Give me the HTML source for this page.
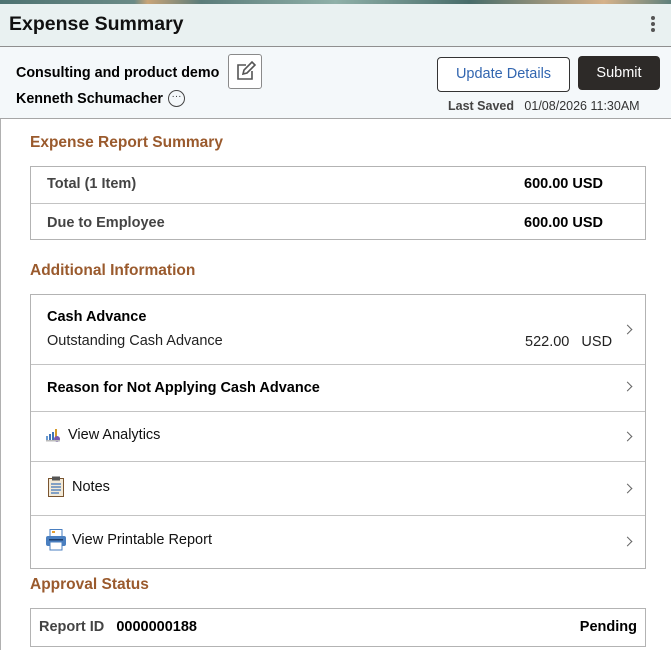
<!DOCTYPE html>
<html><head><meta charset="utf-8"><style>
*{margin:0;padding:0;box-sizing:border-box}
body{width:671px;height:650px;overflow:hidden;font-family:"Liberation Sans",Arial,sans-serif;background:#fff;position:relative;color:#000}
.a{position:absolute;white-space:nowrap}
.top{left:0;top:0;width:671px;height:4px;background:linear-gradient(90deg,#4e7372 0,#6a8a86 20%,#c8a478 22%,#5b7c7a 30%,#8fb0a8 50%,#486c6a 70%,#d6b28a 90%,#5f807c 100%)}
.hdr{left:0;top:4px;width:671px;height:43px;background:#e9f1f1;border-bottom:1px solid #8f8f8f}
.sub{left:0;top:47px;width:671px;height:72px;background:#f4f8fa;border-bottom:1px solid #a6a6a6}
.h{color:#9a5a2d;font-weight:bold;font-size:16px}
.box{left:30px;width:616px;border:1px solid #b3b3b3}
.row{position:absolute;left:0;width:614px;border-top:1px solid #c3c3c3}
.chev{position:absolute;right:14px;width:7px;height:7px;border-right:1.5px solid #666;border-top:1.5px solid #666;transform:rotate(45deg)}
.t{font-size:14.5px}
</style></head><body>
<div class="a top"></div>
<div class="a hdr"></div>
<div class="a" style="left:9px;top:13px;font-size:19.5px;font-weight:bold;color:#111">Expense Summary</div>
<div class="a" style="left:651px;top:16px;width:4px;height:4px;border-radius:2px;background:#555;box-shadow:0 6px 0 #555,0 12px 0 #555"></div>
<div class="a sub"></div>
<div class="a" style="left:16px;top:65px;font-size:14.3px;font-weight:bold">Consulting and product demo</div>
<div class="a" style="left:228px;top:54px;width:34px;height:35px;border:1px solid #8a8a8a;border-radius:3px;background:#fff">
<svg width="34" height="34" viewBox="0 0 34 34" style="position:absolute;left:-1px;top:-1px"><path d="M18 11H10v14h14v-8" fill="none" stroke="#555" stroke-width="1.6"/><path d="M15 20l1-4 8-8 3 3-8 8z" fill="none" stroke="#555" stroke-width="1.6"/></svg></div>
<div class="a" style="left:16px;top:91px;font-size:14.3px;font-weight:bold">Kenneth Schumacher</div>
<div class="a" style="left:168px;top:90px;width:17px;height:17px;border:1px solid #444;border-radius:50%;font-size:10px;line-height:12px;text-align:center;color:#333">···</div>
<div class="a" style="left:437px;top:57px;width:133px;height:35px;border:1px solid #333;border-radius:4px;background:#fff;color:#3266b0;font-size:14.5px;text-align:center;line-height:33px">Update Details</div>
<div class="a" style="left:578px;top:56px;width:82px;height:34px;border-radius:4px;background:#2d2a28;color:#fff;font-size:14.5px;text-align:center;line-height:34px">Submit</div>
<div class="a" style="left:448px;top:99px;font-size:12.5px;color:#333"><b style="color:#444">Last Saved</b>&nbsp;&nbsp; 01/08/2026 11:30AM</div>
<div class="a" style="left:0;top:119px;width:1px;height:531px;background:#b0b0b0"></div>

<div class="a h" style="left:30px;top:134px;font-size:15.5px">Expense Report Summary</div>
<div class="a box" style="top:166px;height:74px">
<div class="a t" style="left:16px;top:9px;font-weight:bold;color:#444">Total (1 Item)</div>
<div class="a t" style="right:42px;top:9px;font-weight:bold">600.00 USD</div>
<div class="row" style="top:36px"></div>
<div class="a t" style="left:16px;top:48px;font-weight:bold;color:#444">Due to Employee</div>
<div class="a t" style="right:42px;top:48px;font-weight:bold">600.00 USD</div>
</div>

<div class="a h" style="left:30px;top:262px;font-size:15.5px">Additional Information</div>
<div class="a box" style="top:294px;height:275px">
<div class="a t" style="left:16px;top:14px;font-weight:bold">Cash Advance</div>
<div class="a t" style="left:16px;top:38px;color:#222">Outstanding Cash Advance</div>
<div class="a t" style="left:494px;top:39px;color:#222">522.00&nbsp;&nbsp; USD</div>
<div class="chev" style="top:31px"></div>
<div class="row" style="top:69px"></div>
<div class="a t" style="left:16px;top:85px;font-weight:bold">Reason for Not Applying Cash Advance</div>
<div class="chev" style="top:88px"></div>
<div class="row" style="top:116px"></div>
<svg class="a" style="left:15px;top:133px" width="18" height="16" viewBox="0 0 18 16"><rect x="0" y="8" width="2" height="4" fill="#6a9ad0"/><rect x="3" y="6" width="2" height="6" fill="#3f74b8"/><rect x="6" y="4" width="2" height="8" fill="#3f74b8"/><rect x="9" y="1" width="2" height="10" fill="#d49a2a"/><circle cx="11" cy="11" r="3" fill="#7a5ab0"/><rect x="0" y="12" width="14" height="1.5" fill="#bbb"/></svg>
<div class="a t" style="left:37px;top:132px;color:#111">View Analytics</div>
<div class="chev" style="top:138px"></div>
<div class="row" style="top:166px"></div>
<svg class="a" style="left:17px;top:181px" width="16" height="21" viewBox="0 0 16 21"><rect x="0.5" y="2.5" width="15" height="18" fill="#f3ead8" stroke="#7a5530"/><rect x="4" y="0.5" width="8" height="4" fill="#555"/><g stroke="#3f74b8" stroke-width="1.2"><path d="M3 8h10M3 11h10M3 14h10M3 17h8"/></g></svg>
<div class="a t" style="left:41px;top:184px;color:#111">Notes</div>
<div class="chev" style="top:190px"></div>
<div class="row" style="top:220px"></div>
<svg class="a" style="left:15px;top:234px" width="20" height="22" viewBox="0 0 20 22"><rect x="4" y="0.5" width="12" height="8" fill="#fff" stroke="#4a7fc0"/><rect x="6" y="2" width="3" height="2" fill="#e8a030"/><rect x="0" y="7" width="20" height="10" rx="2" fill="#4a7fc0"/><rect x="4" y="13" width="12" height="8" fill="#fff" stroke="#4a7fc0"/><rect x="3" y="10" width="14" height="1.5" fill="#1d3f6e"/></svg>
<div class="a t" style="left:41px;top:237px;color:#111">View Printable Report</div>
<div class="chev" style="top:243px"></div>
</div>

<div class="a h" style="left:30px;top:576px;font-size:15.5px">Approval Status</div>
<div class="a box" style="top:608px;height:39px">
<div class="a t" style="left:8px;top:10px;font-weight:bold;color:#444">Report ID&nbsp;&nbsp; <span style="color:#000">0000000188</span></div>
<div class="a t" style="right:8px;top:10px;font-weight:bold">Pending</div>
</div>
</body></html>
